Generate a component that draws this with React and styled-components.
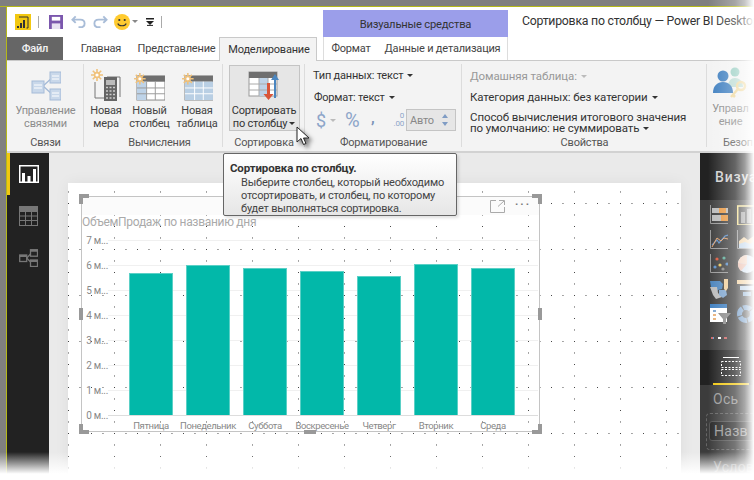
import React from "react";
import styled, { createGlobalStyle } from "styled-components";

const Global = createGlobalStyle`
  html, body { margin: 0; padding: 0; background: #fff; }
  * { box-sizing: border-box; }
  body { font-family: Roboto, "Noto Sans", sans-serif; font-size: 11px; letter-spacing: -.2px; color: #444; }
`;

const Frame = styled.div`
  position: relative; width: 754px; height: 480px; overflow: hidden;
  display: flex; flex-direction: column; background: #fff;
`;
const TopStrip = styled.div`height: 7px; flex: none; background: #7f7f7f; border-bottom: 1px solid #b5b81a;`;
const Body = styled.div`flex: 1; display: flex; min-height: 0;`;
const LeftEdge = styled.div`width: 7px; flex: none; background: #808080; border-right: 1px solid #b5b81a;`;
const Win = styled.div`flex: 1; min-width: 0; display: flex; flex-direction: column;`;

const TitleBar = styled.div`height: 30px; flex: none; display: flex; align-items: flex-start; background: #fff;`;
const Quick = styled.div`width: 316px; height: 30px; flex: none; display: flex; align-items: center; padding: 0 0 1px 8px;`;
const QSep = styled.span`width: 1px; height: 12px; background: #aaa; margin: ${p => p.$m};`;
const QGap = styled.span`width: ${p => p.$w}px; flex: none;`;
const ContextHead = styled.div`
  width: 185px; height: 27px; margin-top: 3px; flex: none; background: #9b9eea; color: #333;
  display: flex; align-items: center; justify-content: center; font-size: 11.2px; padding-top: 2px;
`;
const WinTitle = styled.div`margin: 7px 0 0 14px; white-space: nowrap; font-size: 12.3px; letter-spacing: -.25px; color: #333;`;

const TabRow = styled.div`height: 24px; flex: none; display: flex; align-items: stretch; border-bottom: 1px solid #c9c9c9;`;
const FileTab = styled.div`width: 56px; background: #666; color: #f2f2f2; display: flex; align-items: center; justify-content: center; font-weight: 500;`;
const Tab = styled.div`
  width: ${p => p.$w}px; margin-left: ${p => p.$ml || 0}px; display: flex; align-items: center; justify-content: center;
  white-space: nowrap; color: #444;
`;
const ActiveTab = styled(Tab)`
  background: #f3f3f3; border: 1px solid #c9c9c9; border-bottom: 0; height: 24px; color: #333; padding-left: 2px;
`;
const ContextTabs = styled.div`display: flex; margin-left: 6px; border-left: 1px solid #ddd; border-right: 1px solid #ddd;`;

const Ribbon = styled.div`height: 92px; flex: none; display: flex; background: #f3f3f3; border-bottom: 2px solid #d2d2d2;`;
const Group = styled.div`
  position: relative; width: ${p => p.$w}px; flex: none; display: flex; flex-direction: column;
  &::after { content: ""; position: absolute; right: 0; top: 3px; bottom: 4px; width: 1px; background: #dcdcdc; }
`;
const GroupBody = styled.div`flex: 1; display: flex; justify-content: ${p => p.$j || "center"}; min-height: 0;`;
const GroupLabel = styled.div`
  height: 17px; flex: none; text-align: ${p => (p.$left ? "left" : "center")}; padding-left: ${p => p.$pl || 0}px;
  line-height: 17px; color: #555; white-space: nowrap;
`;
const BigBtn = styled.div`
  width: ${p => p.$w}px; flex: none; display: flex; flex-direction: column; align-items: center; padding-top: ${p => p.$pt ?? 7}px;
  color: ${p => (p.$off ? "#8c8c8c" : "#444")}; line-height: 13px; text-align: center; white-space: nowrap;
`;
const SortBtn = styled(BigBtn)`
  height: 66px; margin-top: 4px; background: #e6e6e6; border: 1px solid #c4c4c4; padding-top: 2px; color: #333;
`;
const BigIcon = styled.div`height: 33px; flex: none; display: flex; align-items: flex-end; margin-bottom: 3px;`;
const Caret = styled.i`
  display: inline-block; width: 0; height: 0; margin-left: ${p => p.$ml ?? 4}px; vertical-align: 2px;
  border-left: 3px solid transparent; border-right: 3px solid transparent; border-top: 3px solid ${p => p.$c || "#333"};
`;
const FormatCol = styled.div`flex: 1; display: flex; flex-direction: column; padding: 7px 0 0 8px;`;
const TextRow = styled.div`height: 22px; line-height: 16px; white-space: nowrap; color: ${p => (p.$off ? "#999" : "#333")}; padding-left: ${p => p.$pl || 0}px;`;
const NumRow = styled.div`display: flex; align-items: center; height: 22px; margin-top: -3px; padding-left: 3px; color: #8da5c9;`;
const Dollar = styled.span`font-size: 18px; width: 12px;`;
const Percent = styled.span`font-size: 20px; margin-left: 9px; width: 18px;`;
const Comma = styled.span`font-size: 15px; font-weight: 700; margin-left: 8px; width: 19px; color: #7b93b8; padding-bottom: 5px;`;
const Dec = styled.span`font-size: 8px; width: 14px; color: #8da5c9; line-height: 8px; text-align: right; flex: none;`;
const AutoBox = styled.div`
  width: 50px; height: 22px; margin-left: 2px; background: #e6e6e6; border: 1px solid #c4c4c4; color: #888;
  display: flex; align-items: center; justify-content: space-between; padding: 0 7px 0 3px; flex: none;
`;
const Spin = styled.span`display: flex; flex-direction: column; gap: 4px;`;
const SpinTri = styled.i`
  width: 0; height: 0; border-left: 3px solid transparent; border-right: 3px solid transparent;
  ${p => (p.$up ? "border-bottom: 4px solid #7f9cc4;" : "border-top: 4px solid #7f9cc4;")}
`;
const PropCol = styled.div`flex: 1; display: flex; flex-direction: column; padding: 7px 0 0 8px; font-size: 11.5px; letter-spacing: -.1px;`;
const Tight = styled.div`line-height: 11px; padding-top: 3px; color: #333; white-space: nowrap;`;

const Main = styled.div`flex: 1; min-height: 0; display: flex;`;
const Rail = styled.div`width: 42px; flex: none; background: #222; display: flex; flex-direction: column;`;
const RailItem = styled.div`
  height: 42px; flex: none; display: flex; align-items: center; justify-content: center; padding-right: 2px;
  border-left: 3px solid ${p => (p.$on ? "#f2c811" : "transparent")};
`;
const Canvas = styled.div`width: 651px; flex: none; background: #eaeaea; padding: 30px 0 0 19px; overflow: hidden;`;
const Page = styled.div`
  width: 613px; height: 291px; padding: 13px 0 0 13px; box-shadow: 0 0 14px rgba(0,0,0,.06); background-color: #fff;
  background-image:
    radial-gradient(circle at .5px .5px, #444 .6px, transparent .7px),
    radial-gradient(circle at .5px .5px, #444 .6px, transparent .7px);
  background-size: 46px 11.5px, 11.5px 46px;
  background-position: 0 8.5px, 0 20px;
`;
const Visual = styled.div`position: relative; width: 459px; height: 236px; border: 1px solid #c4c4c4; display: flex; flex-direction: column;`;
const VHead = styled.div`height: 18px; flex: none; background: #fbfbfb; display: flex; justify-content: flex-end; align-items: center; gap: 10px; padding: 0 8px 0 0;`;
const VDots = styled.span`color: #777; letter-spacing: 2px; font-weight: 700; font-size: 11px; line-height: 10px; margin-top: -2px;`;
const VTitle = styled.div`height: 15px; flex: none; font-size: 12px; letter-spacing: -.3px; line-height: 15px; color: #aaa; white-space: nowrap;`;
const ChartBody = styled.div`flex: none; display: flex; height: 200px; margin-top: -2px;`;
const YAxis = styled.div`width: 26px; flex: none; display: flex; flex-direction: column; align-items: flex-end;`;
const YTick = styled.div`height: 25px; line-height: 25px; font-size: 10px; letter-spacing: -.3px; color: #888; white-space: nowrap;`;
const PlotCol = styled.div`flex: none; width: 430px; display: flex; flex-direction: column;`;
const Bars = styled.div`
  height: 188px; flex: none; display: flex; align-items: flex-end; justify-content: space-between; padding: 0 23px 0 21px;
  border-bottom: 1px solid #ddd;
  background-image: linear-gradient(to bottom, transparent 12px, #f0f0f0 12px, #f0f0f0 13px, transparent 13px);
  background-size: 100% 25px;
`;
const Bar = styled.div`width: 44px; flex: none; background: #02b8a9; border: 1px solid #5bd0c6; border-bottom: 0;`;
const XAxis = styled.div`display: flex; justify-content: space-between; padding: 0 23px 0 21px; margin-top: 3px;`;
const XTick = styled.div`width: 44px; flex: none; display: flex; justify-content: center; font-size: 9.5px; letter-spacing: -.4px; line-height: 13px; color: #888; white-space: nowrap;`;
const Handle = styled.div`position: absolute; background: #999; ${p => p.$s}`;

const Pane = styled.div`flex: 1; min-width: 0; display: flex; flex-direction: column; background: #3c3c3c;`;
const PaneHead = styled.div`height: 47px; flex: none; background: #222; color: #d0d0d0; font-size: 14px; font-weight: 500; padding: 16px 0 0 15px; letter-spacing: .8px; white-space: nowrap;`;
const VizGrid = styled.div`
  height: 150px; flex: none; background: #3e3e3e; display: grid; grid-template-columns: 18px 18px; grid-auto-rows: 24.6px; column-gap: 9px;
  padding: 3px 0 0 10px; align-items: center;
`;
const PaneTabs = styled.div`height: 35px; flex: none; background: #222; display: flex; padding-left: 13px;`;
const PaneTab = styled.div`width: 36px; height: 35px; display: flex; justify-content: center; padding-top: 7px; border-bottom: 2px solid #f2c811;`;
const Field = styled.div`flex: 1; padding: 6px 0 0 13px; color: #999; font-size: 14px; letter-spacing: .3px; line-height: 16px;`;
const DropZone = styled.div`margin: 6px 0 0 -7px; height: 37px; border: 1px dashed #666; border-radius: 4px 0 0 4px; padding: 7px 0 0 2px;`;
const Pill = styled.div`height: 20px; background: #2a2a2a; border: 1px solid #555; border-radius: 3px 0 0 3px; color: #999; font-size: 14px; line-height: 18px; padding-left: 4px; white-space: nowrap; overflow: hidden;`;
const Faded = styled.div`margin-top: 9px; color: #888; white-space: nowrap;`;

const Tooltip = styled.div`
  position: absolute; left: 223px; top: 153px; width: 234px; height: 63px; border: 1px solid #666; border-radius: 2px;
  background: linear-gradient(#ffffff, #e6e6e6); box-shadow: 2px 2px 3px rgba(0,0,0,.12); padding: 7px 6px; color: #333;
`;
const TipTitle = styled.div`font-weight: 700; font-size: 11.5px; letter-spacing: -.15px; line-height: 14px; margin-bottom: 1px; white-space: nowrap; color: #333;`;
const TipText = styled.div`padding-left: 11px; line-height: 13px; white-space: nowrap; color: #444;`;
const Cursor = styled.svg`position: absolute; left: 296px; top: 126px; filter: drop-shadow(3px 3px 2px rgba(0,0,0,.55));`;
const FadeRight = styled.div`position: absolute; right: 0; top: 0; bottom: 0; width: 46px; pointer-events: none; background: linear-gradient(to right, rgba(255,255,255,0), rgba(255,255,255,.3) 59%, rgba(255,255,255,.56) 80%, #fff 100%);`;
const FadeBottom = styled.div`position: absolute; left: 0; right: 0; bottom: 0; height: 28px; pointer-events: none; background: linear-gradient(to bottom, rgba(255,255,255,0), #fff 78%);`;
const UndoSvg = styled.svg`transform: ${p => (p.$flip ? "scaleX(-1)" : "none")};`;

const Burst = ({ x = 0, y = 0 }) => (
  <g transform={`translate(${x} ${y})`} stroke="#f0c27c" strokeWidth="1.6" fill="none">
    <path d="M6 0v12M0 6h12M1.8 1.8l8.4 8.4M10.2 1.8l-8.4 8.4" />
    <circle cx="6" cy="6" r="2.4" fill="#fff" stroke="#f0c27c" />
  </g>
);
const TableIcon = ({ firstBlue, allBlue }) => (
  <svg width="31" height="28" viewBox="0 0 32 29">
    <rect x="3" y="3" width="29" height="25" fill="#fff" stroke="#888" />
    <rect x="3" y="3" width="29" height="6" fill="#6f6f6f" />
    {allBlue && <rect x="3" y="9" width="29" height="19" fill="#b9cfe4" />}
    {firstBlue && <rect x="3" y="9" width="10" height="19" fill="#bed3e8" />}
    <path d="M13 9v19M22 9v19M3 15.5h29M3 21.5h29" stroke={allBlue ? "#fff" : "#999"} fill="none" />
    <Burst x={0} y={0} />
  </svg>
);
const MeasureIcon = () => (
  <svg width="30" height="32" viewBox="0 0 30 32">
    <Burst x={0} y={0} />
    <path d="M4 13v16h9M16 8h13v20" stroke="#777" fill="none" />
    <rect x="13" y="8" width="13" height="24" fill="#666" />
    <rect x="15" y="11" width="9" height="5" fill="#bbb" />
    <path d="M15 18.5h9M15 22h9M15 25.5h9M15 29h9" stroke="#ccc" strokeWidth="1.6" strokeDasharray="2 1.5" />
  </svg>
);
const LinkIcon = () => (
  <svg width="30" height="30" viewBox="0 0 30 30" stroke="#a5bbd8" fill="#c9d8ea">
    <path d="M12 15L22 6M12 15l10 9" fill="none" strokeWidth="1.4" />
    <rect x="1" y="10" width="12" height="12" />
    <rect x="19" y="1" width="11" height="11" />
    <rect x="19" y="18" width="11" height="11" />
    <path d="M3 14h8M3 17h8M21 5h7M21 8h7M21 22h7M21 25h7" stroke="#fff" fill="none" />
  </svg>
);
const SortIcon = () => (
  <svg width="32" height="30" viewBox="0 0 32 30">
    <rect x="1" y="1" width="28" height="24" fill="#fff" stroke="#999" />
    <rect x="1" y="1" width="28" height="6" fill="#6f6f6f" />
    <rect x="11" y="7" width="9" height="18" fill="#bed3e8" />
    <path d="M11 7v18M20 7v18M1 13h28M1 19h28" stroke="#aaa" fill="none" />
    <path d="M19 14v11h-3.5l5 6 5-6H22V14z" transform="translate(0 -2)" fill="#d9563a" />
    <path d="M27 29V11h3l-4-6-4 6h3v18z" transform="translate(1 -2)" fill="#4a86c0" />
  </svg>
);
const UsersIcon = () => (
  <svg width="38" height="34" viewBox="0 0 38 34">
    <circle cx="23" cy="7" r="4.5" fill="#9bcfc4" />
    <path d="M16 22c0-6 3-9 7-9s8 3 8 9z" fill="#bcdcd4" />
    <circle cx="11" cy="11" r="5.5" fill="#3f7fc0" />
    <path d="M1 28c0-7 4-11 10-11s10 4 10 11z" fill="#3f7fc0" />
    <circle cx="29" cy="21" r="4" fill="none" stroke="#efd89b" strokeWidth="2.5" />
    <path d="M26 24l-7 8M21 30l2 2" stroke="#efd89b" strokeWidth="2.5" />
  </svg>
);
const Logo = () => (
  <svg width="16" height="16" viewBox="0 0 16 16">
    <rect width="16" height="16" fill="#f2c811" />
    <path d="M2 14V12h2v2zM5 14V9h2v5zM8 14V6h2v8z" fill="#333" />
    <path d="M4 3h9v11h-1.5" stroke="#333" fill="none" />
  </svg>
);
const Save = () => (
  <svg width="14" height="14" viewBox="0 0 15 15">
    <path d="M0 0h15v15H0z" fill="#7b57ad" />
    <rect x="3" y="2" width="9" height="4" fill="#fff" />
    <rect x="3" y="9" width="9" height="6" fill="#e8e2f2" />
  </svg>
);
const Undo = ({ $flip }) => (
  <UndoSvg $flip={$flip} width="15" height="14" viewBox="0 0 16 14">
    <path d="M5 1L1.5 4.5 5 8M2 4.5h8c3 0 4.5 2 4.5 4s-1.5 4-4.5 4H8" fill="none" stroke="#a9bdd8" strokeWidth="2" />
  </UndoSvg>
);
const Smile = () => (
  <svg width="16" height="16" viewBox="0 0 16 16">
    <circle cx="8" cy="8" r="8" fill="#ffcb2f" />
    <circle cx="5.3" cy="6" r="1.1" fill="#333" /><circle cx="10.7" cy="6" r="1.1" fill="#333" />
    <path d="M3.8 9.5c1.2 3 7.2 3 8.4 0" fill="none" stroke="#333" strokeWidth="1.1" />
  </svg>
);
const Customize = () => (
  <svg width="8" height="8" viewBox="0 0 8 8"><path d="M0 0h8v1.4H0zM0 3h8L4 7z" fill="#222" /><path d="M1 7.4h6" stroke="#222" /></svg>
);
const RailReport = () => (
  <svg width="20" height="18" viewBox="0 0 20 18" fill="#fff">
    <path d="M.75.75h18.5v16.5H.75z" fill="none" stroke="#fff" strokeWidth="1.5" />
    <path d="M3 8h3v9H3zM8.5 11h3v6h-3zM14 4h3v13h-3z" />
  </svg>
);
const RailData = () => (
  <svg width="19" height="20" viewBox="0 0 19 20">
    <rect width="19" height="20" fill="#777" />
    <path d="M1 6h5v3.5H1zM7 6h5v3.5H7zM13 6h5v3.5h-5zM1 10.5h5V14H1zM7 10.5h5V14H7zM13 10.5h5V14h-5zM1 15h5v4H1zM7 15h5v4H7zM13 15h5v4h-5z" fill="#222" />
  </svg>
);
const RailModel = () => (
  <svg width="19" height="18" viewBox="0 0 19 18" fill="none" stroke="#777" strokeWidth="1.3">
    <rect x=".7" y="6" width="7" height="6.5" /><rect x="11.5" y=".7" width="7" height="6.5" /><rect x="11.5" y="11" width="7" height="6.5" />
    <path d="M7.7 9l3.8-4M7.7 9l3.8 4" />
    <path d="M.7 6h7v2h-7zM11.5 .7h7v2h-7zM11.5 11h7v2h-7z" fill="#777" stroke="none" />
  </svg>
);
const Expand = () => (
  <svg width="15" height="13" viewBox="0 0 15 13" fill="none" stroke="#aaa">
    <path d="M6 .5H.5v12h14V7M9 .5h5.5V5M14 1L8 6.5" />
  </svg>
);
const Viz = ({ children }) => <svg width="18" height="20" viewBox="0 0 18 20">{children}</svg>;
const Axes = () => <path d="M.5 0v18.5H18" fill="none" stroke="#999" />;
const vizIcons = [
  <Viz><Axes /><path d="M2 3h16v5H2z" fill="#bbb" /><path d="M2 10h16v6H2z" fill="#bbb" /><path d="M9 3h7v5H9zM11 10h7v6h-7z" fill="#e99a45" /></Viz>,
  <svg width="18" height="20" viewBox="0 0 18 20"><rect x=".7" y="1" width="20" height="19" fill="none" stroke="#f4e08a" strokeWidth="1.6" /><path d="M4 7h4v11H4zM10 4h4v14h-4zM16 9h4v9h-4z" fill="#999" /></svg>,
  <Viz><Axes /><path d="M2 15l5-5 2 3 6-7 3-1" fill="none" stroke="#5b8fc9" strokeWidth="1.2" /><path d="M2 17l5-9 4 3 3-3 4 1" fill="none" stroke="#e9a36b" strokeWidth="1" /></Viz>,
  <Viz><Axes /><path d="M2 18V11l5-4 4 3 7-5v13z" fill="#f0ce9b" /><path d="M2 18v-4l6-2 5 2 5-3v7z" fill="#b8d0e8" /></Viz>,
  <Viz><Axes /><circle cx="5" cy="13" r="1.6" fill="#5b8fc9" /><circle cx="7" cy="5" r="1.6" fill="#d9563a" /><circle cx="10" cy="11" r="1.6" fill="#e8c35a" /><circle cx="14" cy="4" r="1.6" fill="#5dae9a" /><circle cx="17" cy="10" r="1.6" fill="#5b8fc9" /><circle cx="13" cy="15" r="1.6" fill="#888" /></Viz>,
  <svg width="18" height="20" viewBox="0 0 18 20"><circle cx="10" cy="10" r="9" fill="#cfe0f0" /><path d="M10 10V1a9 9 0 0 0-9 8z" fill="#f0cdb8" /><path d="M10 10L1 9a9 9 0 0 0 3 8z" fill="#e9b9a8" /></svg>,
  <svg width="18" height="21" viewBox="0 0 18 21"><path d="M0 2h10l3 3-1 5-4 1-2 4-2-1-3-6z" fill="#4b84bd" /><path d="M0 8h7l1 6 4 4-6 2-3-4z" fill="#bbb" /><path d="M9 11h7l1 5-4 3-4-3z" fill="#7fa6cf" /><path d="M14 0h4v9l-2 3-2-2z" fill="#f0ce9b" /></svg>,
  <svg width="18" height="18" viewBox="0 0 18 18"><path d="M0 0h20v4H0z" fill="#f0ce9b" /><path d="M3 6h14v4H3z" fill="#b8d0e8" /><path d="M6 12h8v4H6z" fill="#88add0" /></svg>,
  <svg width="21" height="20" viewBox="0 0 21 20"><rect width="17" height="18" fill="#fff" /><rect width="17" height="4" fill="#3f7fc0" /><path d="M3 10h3v2H3zM3 14h3v2H3z" fill="#e9b27a" /><path d="M3 6h3v2H3z" fill="#7fa6cf" /><path d="M8 9h13l-5 6v5h-3v-5z" fill="#888" /></svg>,
  <svg width="18" height="18" viewBox="0 0 18 18"><circle cx="9" cy="9" r="6.5" fill="none" stroke="#6d97c4" strokeWidth="5" strokeDasharray="8 1" /></svg>,
  <svg width="18" height="4" viewBox="0 0 18 4"><path d="M1 1h3v2H1z" fill="#c66" /><path d="M8 1h3v2H8z" fill="#fff" /><path d="M14 1h3v2h-3z" fill="#c66" /><path d="M3 1h1v2H3z" fill="#69c" /></svg>,
];

const bars = [
  { day: "Пятница", h: 142 }, { day: "Понедельник", h: 150 }, { day: "Суббота", h: 147 }, { day: "Воскресенье", h: 144 },
  { day: "Четверг", h: 139 }, { day: "Вторник", h: 151 }, { day: "Среда", h: 147 },
];
const ticks = ["7 м...", "6 м...", "5 м...", "4 м...", "3 м...", "2 м...", "1 м...", "0 м..."];
const handles = [
  "left:-3px;top:-3px;width:10px;height:4px;", "left:-3px;top:-3px;width:4px;height:10px;",
  "right:-3px;top:-3px;width:10px;height:4px;", "right:-3px;top:-3px;width:4px;height:10px;",
  "left:-3px;bottom:-3px;width:10px;height:4px;", "left:-3px;bottom:-3px;width:4px;height:10px;",
  "right:-3px;bottom:-3px;width:10px;height:4px;", "right:-3px;bottom:-3px;width:4px;height:10px;",
  "left:-3px;top:111px;width:4px;height:12px;", "right:-3px;top:111px;width:4px;height:12px;",
  "left:222px;bottom:-3px;width:12px;height:4px;",
];

export default function App() {
  return (
    <Frame>
      <Global />
      <TopStrip />
      <Body>
        <LeftEdge />
        <Win>
          <TitleBar>
            <Quick>
              <Logo />
              <QSep $m="0 10px 0 7px" />
              <Save />
              <QGap $w={8} />
              <Undo />
              <QGap $w={7} />
              <Undo $flip />
              <QGap $w={6} />
              <Smile />
              <Caret $c="#888" $ml={2} />
              <QGap $w={8} />
              <Customize />
              <QSep $m="0 0 0 7px" />
            </Quick>
            <ContextHead>Визуальные средства</ContextHead>
            <WinTitle>Сортировка по столбцу — Power BI Desktop</WinTitle>
          </TitleBar>
          <TabRow>
            <FileTab>Файл</FileTab>
            <Tab $w={66} $ml={5}>Главная</Tab>
            <Tab $w={85}>Представление</Tab>
            <ActiveTab $w={98}>Моделирование</ActiveTab>
            <ContextTabs>
              <Tab $w={54}>Формат</Tab>
              <Tab $w={129}>Данные и детализация</Tab>
            </ContextTabs>
          </TabRow>
          <Ribbon>
            <Group $w={77}>
              <GroupBody>
                <BigBtn $w={72} $off><BigIcon><LinkIcon /></BigIcon>Управление<br />связями</BigBtn>
              </GroupBody>
              <GroupLabel>Связи</GroupLabel>
            </Group>
            <Group $w={139}>
              <GroupBody $j="flex-start">
                <BigBtn $w={44}><BigIcon><MeasureIcon /></BigIcon>Новая<br />мера</BigBtn>
                <BigBtn $w={43}><BigIcon><TableIcon firstBlue /></BigIcon>Новый<br />столбец</BigBtn>
                <BigBtn $w={52}><BigIcon><TableIcon allBlue /></BigIcon>Новая<br />таблица</BigBtn>
              </GroupBody>
              <GroupLabel $pl={12}>Вычисления</GroupLabel>
            </Group>
            <Group $w={82}>
              <GroupBody>
                <SortBtn $w={71}>
                  <BigIcon><SortIcon /></BigIcon>
                  <span>Сортировать<br />по столбцу<Caret $ml={2} /></span>
                </SortBtn>
              </GroupBody>
              <GroupLabel>Сортировка</GroupLabel>
            </Group>
            <Group $w={157}>
              <GroupBody $j="flex-start">
                <FormatCol>
                  <TextRow>Тип данных: текст<Caret /></TextRow>
                  <TextRow $pl={1}>Формат: текст<Caret /></TextRow>
                  <NumRow>
                    <Dollar>$</Dollar><Caret $c="#bbb" $ml={2} />
                    <Percent>%</Percent>
                    <Comma>,</Comma>
                    <Dec>0<br />.00</Dec>
                    <AutoBox>Авто<Spin><SpinTri $up /><SpinTri /></Spin></AutoBox>
                  </NumRow>
                </FormatCol>
              </GroupBody>
              <GroupLabel>Форматирование</GroupLabel>
            </Group>
            <Group $w={245}>
              <GroupBody $j="flex-start">
                <PropCol>
                  <TextRow $off>Домашняя таблица:<Caret $c="#bbb" /></TextRow>
                  <TextRow>Категория данных: без категории<Caret /></TextRow>
                  <Tight>Способ вычисления итогового значения<br />по умолчанию: не суммировать<Caret /></Tight>
                </PropCol>
              </GroupBody>
              <GroupLabel>Свойства</GroupLabel>
            </Group>
            <Group $w={47}>
              <GroupBody $j="flex-start">
                <BigBtn $w={47} $off $pt={5}><BigIcon><UsersIcon /></BigIcon>Управл<br />ение</BigBtn>
              </GroupBody>
              <GroupLabel $left $pl={16}>Безоп</GroupLabel>
            </Group>
          </Ribbon>
          <Main>
            <Rail>
              <RailItem $on><RailReport /></RailItem>
              <RailItem><RailData /></RailItem>
              <RailItem><RailModel /></RailItem>
            </Rail>
            <Canvas>
              <Page>
                <Visual>
                  <VHead><Expand /><VDots>···</VDots></VHead>
                  <VTitle>ОбъемПродаж по названию дня</VTitle>
                  <ChartBody>
                    <YAxis>{ticks.map(t => <YTick key={t}>{t}</YTick>)}</YAxis>
                    <PlotCol>
                      <Bars>{bars.map(b => <Bar key={b.day} style={{ height: b.h }} />)}</Bars>
                      <XAxis>{bars.map(b => <XTick key={b.day}>{b.day}</XTick>)}</XAxis>
                    </PlotCol>
                  </ChartBody>
                  {handles.map(s => <Handle key={s} $s={s} />)}
                </Visual>
              </Page>
            </Canvas>
            <Pane>
              <PaneHead>Визуал</PaneHead>
              <VizGrid>{vizIcons.map((v, i) => <React.Fragment key={i}>{v}</React.Fragment>)}</VizGrid>
              <PaneTabs>
                <PaneTab>
                  <svg width="20" height="20" viewBox="0 0 20 20" fill="none" stroke="#fff">
                    <path d="M2 .5h16" />
                    <rect x=".5" y="4.5" width="19" height="6" strokeDasharray="2 1.5" />
                    <rect x=".5" y="12.5" width="19" height="6" strokeDasharray="2 1.5" />
                  </svg>
                </PaneTab>
              </PaneTabs>
              <Field>
                Ось
                <DropZone><Pill>Назв</Pill></DropZone>
                <Faded>Условн</Faded>
              </Field>
            </Pane>
          </Main>
        </Win>
      </Body>
      <Tooltip>
        <TipTitle>Сортировка по столбцу.</TipTitle>
        <TipText>Выберите столбец, который необходимо<br />отсортировать, и столбец, по которому<br />будет выполняться сортировка.</TipText>
      </Tooltip>
      <Cursor width="14" height="20" viewBox="0 0 14 20">
        <path d="M1 1v15l4-3.5 2.5 6 2.5-1-2.5-5.5H13z" fill="#fff" stroke="#222" />
      </Cursor>
      <FadeRight />
      <FadeBottom />
    </Frame>
  );
}
